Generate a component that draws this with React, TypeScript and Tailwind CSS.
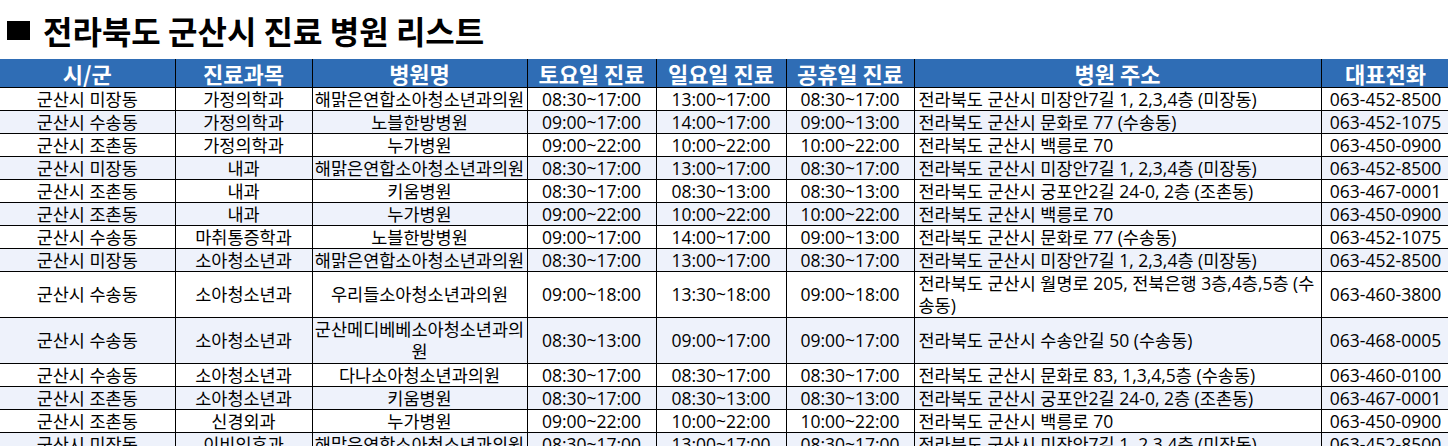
import React from "react";

type Row = {
  c: string[];
  tall?: boolean;
};

const rows: Row[] = [
  { c: ["군산시 미장동", "가정의학과", "해맑은연합소아청소년과의원", "08:30~17:00", "13:00~17:00", "08:30~17:00", "전라북도 군산시 미장안7길 1, 2,3,4층 (미장동)", "063-452-8500"] },
  { c: ["군산시 수송동", "가정의학과", "노블한방병원", "09:00~17:00", "14:00~17:00", "09:00~13:00", "전라북도 군산시 문화로 77 (수송동)", "063-452-1075"] },
  { c: ["군산시 조촌동", "가정의학과", "누가병원", "09:00~22:00", "10:00~22:00", "10:00~22:00", "전라북도 군산시 백릉로 70", "063-450-0900"] },
  { c: ["군산시 미장동", "내과", "해맑은연합소아청소년과의원", "08:30~17:00", "13:00~17:00", "08:30~17:00", "전라북도 군산시 미장안7길 1, 2,3,4층 (미장동)", "063-452-8500"] },
  { c: ["군산시 조촌동", "내과", "키움병원", "08:30~17:00", "08:30~13:00", "08:30~13:00", "전라북도 군산시 궁포안2길 24-0, 2층 (조촌동)", "063-467-0001"] },
  { c: ["군산시 조촌동", "내과", "누가병원", "09:00~22:00", "10:00~22:00", "10:00~22:00", "전라북도 군산시 백릉로 70", "063-450-0900"] },
  { c: ["군산시 수송동", "마취통증학과", "노블한방병원", "09:00~17:00", "14:00~17:00", "09:00~13:00", "전라북도 군산시 문화로 77 (수송동)", "063-452-1075"] },
  { c: ["군산시 미장동", "소아청소년과", "해맑은연합소아청소년과의원", "08:30~17:00", "13:00~17:00", "08:30~17:00", "전라북도 군산시 미장안7길 1, 2,3,4층 (미장동)", "063-452-8500"] },
  { c: ["군산시 수송동", "소아청소년과", "우리들소아청소년과의원", "09:00~18:00", "13:30~18:00", "09:00~18:00", "ADDR9", "063-460-3800"], tall: true },
  { c: ["군산시 수송동", "소아청소년과", "NAME10", "08:30~13:00", "09:00~17:00", "09:00~17:00", "전라북도 군산시 수송안길 50 (수송동)", "063-468-0005"], tall: true },
  { c: ["군산시 수송동", "소아청소년과", "다나소아청소년과의원", "08:30~17:00", "08:30~17:00", "08:30~17:00", "전라북도 군산시 문화로 83, 1,3,4,5층 (수송동)", "063-460-0100"] },
  { c: ["군산시 조촌동", "소아청소년과", "키움병원", "08:30~17:00", "08:30~13:00", "08:30~13:00", "전라북도 군산시 궁포안2길 24-0, 2층 (조촌동)", "063-467-0001"] },
  { c: ["군산시 조촌동", "신경외과", "누가병원", "09:00~22:00", "10:00~22:00", "10:00~22:00", "전라북도 군산시 백릉로 70", "063-450-0900"] },
  { c: ["군산시 미장동", "이비인후과", "해맑은연합소아청소년과의원", "08:30~17:00", "13:00~17:00", "08:30~17:00", "전라북도 군산시 미장안7길 1, 2,3,4층 (미장동)", "063-452-8500"] },
];

const headers = ["시/군", "진료과목", "병원명", "토요일 진료", "일요일 진료", "공휴일 진료", "병원 주소", "대표전화"];

function renderCell(v: string) {
  if (v === "ADDR9") {
    return (
      <>
        전라북도 군산시 월명로 205, 전북은행 3층,4층,5층 (수
        <br />
        송동)
      </>
    );
  }
  if (v === "NAME10") {
    return (
      <>
        군산메디베베소아청소년과의
        <br />
        원
      </>
    );
  }
  return v;
}

export default function App() {
  return (
    <div
      className="w-[1448px] h-[446px] overflow-hidden bg-white text-black"
      style={{ fontFamily: '"Open Sans", "Noto Sans CJK KR", sans-serif' }}
    >
      <div
        className="h-[59px] flex items-center pl-[7px] text-[32px] font-bold leading-none"
        style={{ fontFamily: '"Noto Sans CJK KR", sans-serif' }}
      >
        <span className="inline-block w-[23px] h-[19px] bg-black mr-[13px] mt-[1px]" />
        <span>전라북도 군산시 진료 병원 리스트</span>
      </div>
      <table className="table-fixed border-collapse w-[1450px] text-[17.5px]">
        <colgroup>
          <col className="w-[175px]" />
          <col className="w-[137px]" />
          <col className="w-[215px]" />
          <col className="w-[129px]" />
          <col className="w-[130px]" />
          <col className="w-[128px]" />
          <col className="w-[407px]" />
          <col className="w-[129px]" />
        </colgroup>
        <thead>
          <tr className="h-[28px] bg-[#2f6db5]">
            {headers.map((h, i) => (
              <th
                key={h}
                className={`p-0 h-[28px] text-center text-white font-bold text-[22px] leading-[26px] border-black border-b ${i === 0 ? "border-r" : "border-x"}`}
                style={{ fontFamily: '"Noto Sans CJK KR", sans-serif' }}
              >
                {h}
              </th>
            ))}
          </tr>
        </thead>
        <tbody>
          {rows.map((r, ri) => (
            <tr key={ri} className={ri % 2 === 1 ? "bg-[#eef2fb]" : "bg-white"}>
              {r.c.map((v, ci) => (
                <td
                  key={ci}
                  className={`p-0 border-black border-y ${ci === 0 ? "border-r" : "border-x"} ${r.tall ? "h-[46px]" : "h-[23px]"} leading-[22px] whitespace-nowrap ${ci === 6 ? "text-left pl-[4px]" : "text-center"}`}
                >
                  {renderCell(v)}
                </td>
              ))}
            </tr>
          ))}
        </tbody>
      </table>
    </div>
  );
}
